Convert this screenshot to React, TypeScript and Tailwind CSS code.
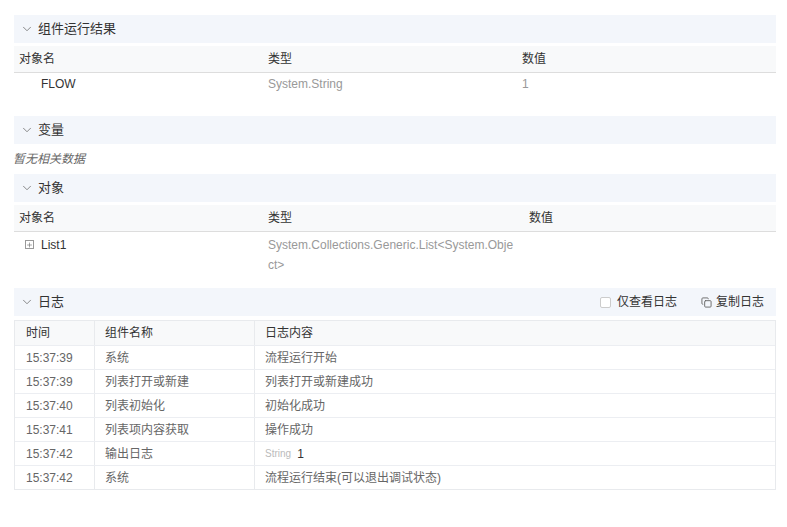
import { ChevronDown, Copy, Plus } from 'lucide-react';

const font = { fontFamily: '"Liberation Sans", "Noto Sans CJK SC", sans-serif' };

const logs = [
  ['15:37:39', '系统', '流程运行开始'],
  ['15:37:39', '列表打开或新建', '列表打开或新建成功'],
  ['15:37:40', '列表初始化', '初始化成功'],
  ['15:37:41', '列表项内容获取', '操作成功'],
  ['15:37:42', '输出日志', ''],
  ['15:37:42', '系统', '流程运行结束(可以退出调试状态)'],
];

function Header({ title, children }: { title: string; children?: React.ReactNode }) {
  return (
    <div className="h-[28px] bg-[#f3f6fb] flex items-center pl-[6px] pr-[12px] text-[13px] text-[#333]">
      <ChevronDown size={14} strokeWidth={1.3} className="text-[#666]" />
      <span className="ml-[4px]">{title}</span>
      <div className="ml-auto flex items-center gap-[24px] text-[12px]">{children}</div>
    </div>
  );
}

export default function App() {
  return (
    <div style={font} className="w-[787px] h-[527px] bg-white pt-[15px] px-[14px] pr-[11px] text-[12px]">
      <Header title="组件运行结果" />
      <div className="mt-[3px] h-[27px] bg-[#f8f9fa] border-b border-[#ddd] flex items-center text-[#333]">
        <div className="w-[254px] pl-[5px]">对象名</div>
        <div className="w-[254px]">类型</div>
        <div>数值</div>
      </div>
      <div className="h-[22px] flex items-center">
        <div className="w-[254px] pl-[27px] text-[#333]">FLOW</div>
        <div className="w-[254px] text-[#999]">System.String</div>
        <div className="text-[#999]">1</div>
      </div>
      <div className="h-[21px]" />
      <Header title="变量" />
      <div className="h-[30px] flex items-center italic text-[#666] -ml-[1px]">暂无相关数据</div>
      <Header title="对象" />
      <div className="mt-[3px] h-[27px] bg-[#f8f9fa] border-b border-[#ddd] flex items-center text-[#333]">
        <div className="w-[254px] pl-[5px]">对象名</div>
        <div className="w-[261px]">类型</div>
        <div>数值</div>
      </div>
      <div className="flex pt-[3px] leading-[20px]">
        <div className="w-[254px] pl-[11px] flex items-start text-[#333]">
          <span className="mt-[5px] w-[9px] h-[9px] border border-[#999] flex items-center justify-center mr-[7px]">
            <Plus size={8} strokeWidth={2} className="text-[#666]" />
          </span>
          List1
        </div>
        <div className="w-[248px] text-[#999] break-all">System.Collections.Generic.List&lt;System.Object&gt;</div>
      </div>
      <div className="h-[13px]" />
      <Header title="日志">
        <label className="flex items-center gap-[6px] text-[#333]">
          <span className="w-[11px] h-[11px] border border-[#ccc] rounded-[2px] bg-white" />
          仅查看日志
        </label>
        <span className="flex items-center gap-[4px] text-[#333]">
          <Copy size={11} className="text-[#666]" />
          复制日志
        </span>
      </Header>
      <div className="mt-[4px] border border-[#e8eaed]">
        <div className="flex h-[24px] bg-[#f8f9fa] items-center text-[#333]">
          <div className="w-[80px] pl-[11px] h-full flex items-center border-r border-[#e8eaed]">时间</div>
          <div className="w-[160px] pl-[10px] h-full flex items-center border-r border-[#e8eaed]">组件名称</div>
          <div className="pl-[10px]">日志内容</div>
        </div>
        {logs.map((r, i) => (
          <div key={i} className="flex h-[24px] items-center border-t border-[#eceef2] text-[#666]">
            <div className="w-[80px] pl-[11px] h-full flex items-center border-r border-[#e8eaed]">{r[0]}</div>
            <div className="w-[160px] pl-[10px] h-full flex items-center border-r border-[#e8eaed]">{r[1]}</div>
            <div className="pl-[10px] flex items-center">
              {i === 4 ? (
                <>
                  <span className="text-[10px] text-[#bbb] mr-[6px]">String</span>
                  <span className="text-[#333]">1</span>
                </>
              ) : (
                r[2]
              )}
            </div>
          </div>
        ))}
      </div>
    </div>
  );
}
